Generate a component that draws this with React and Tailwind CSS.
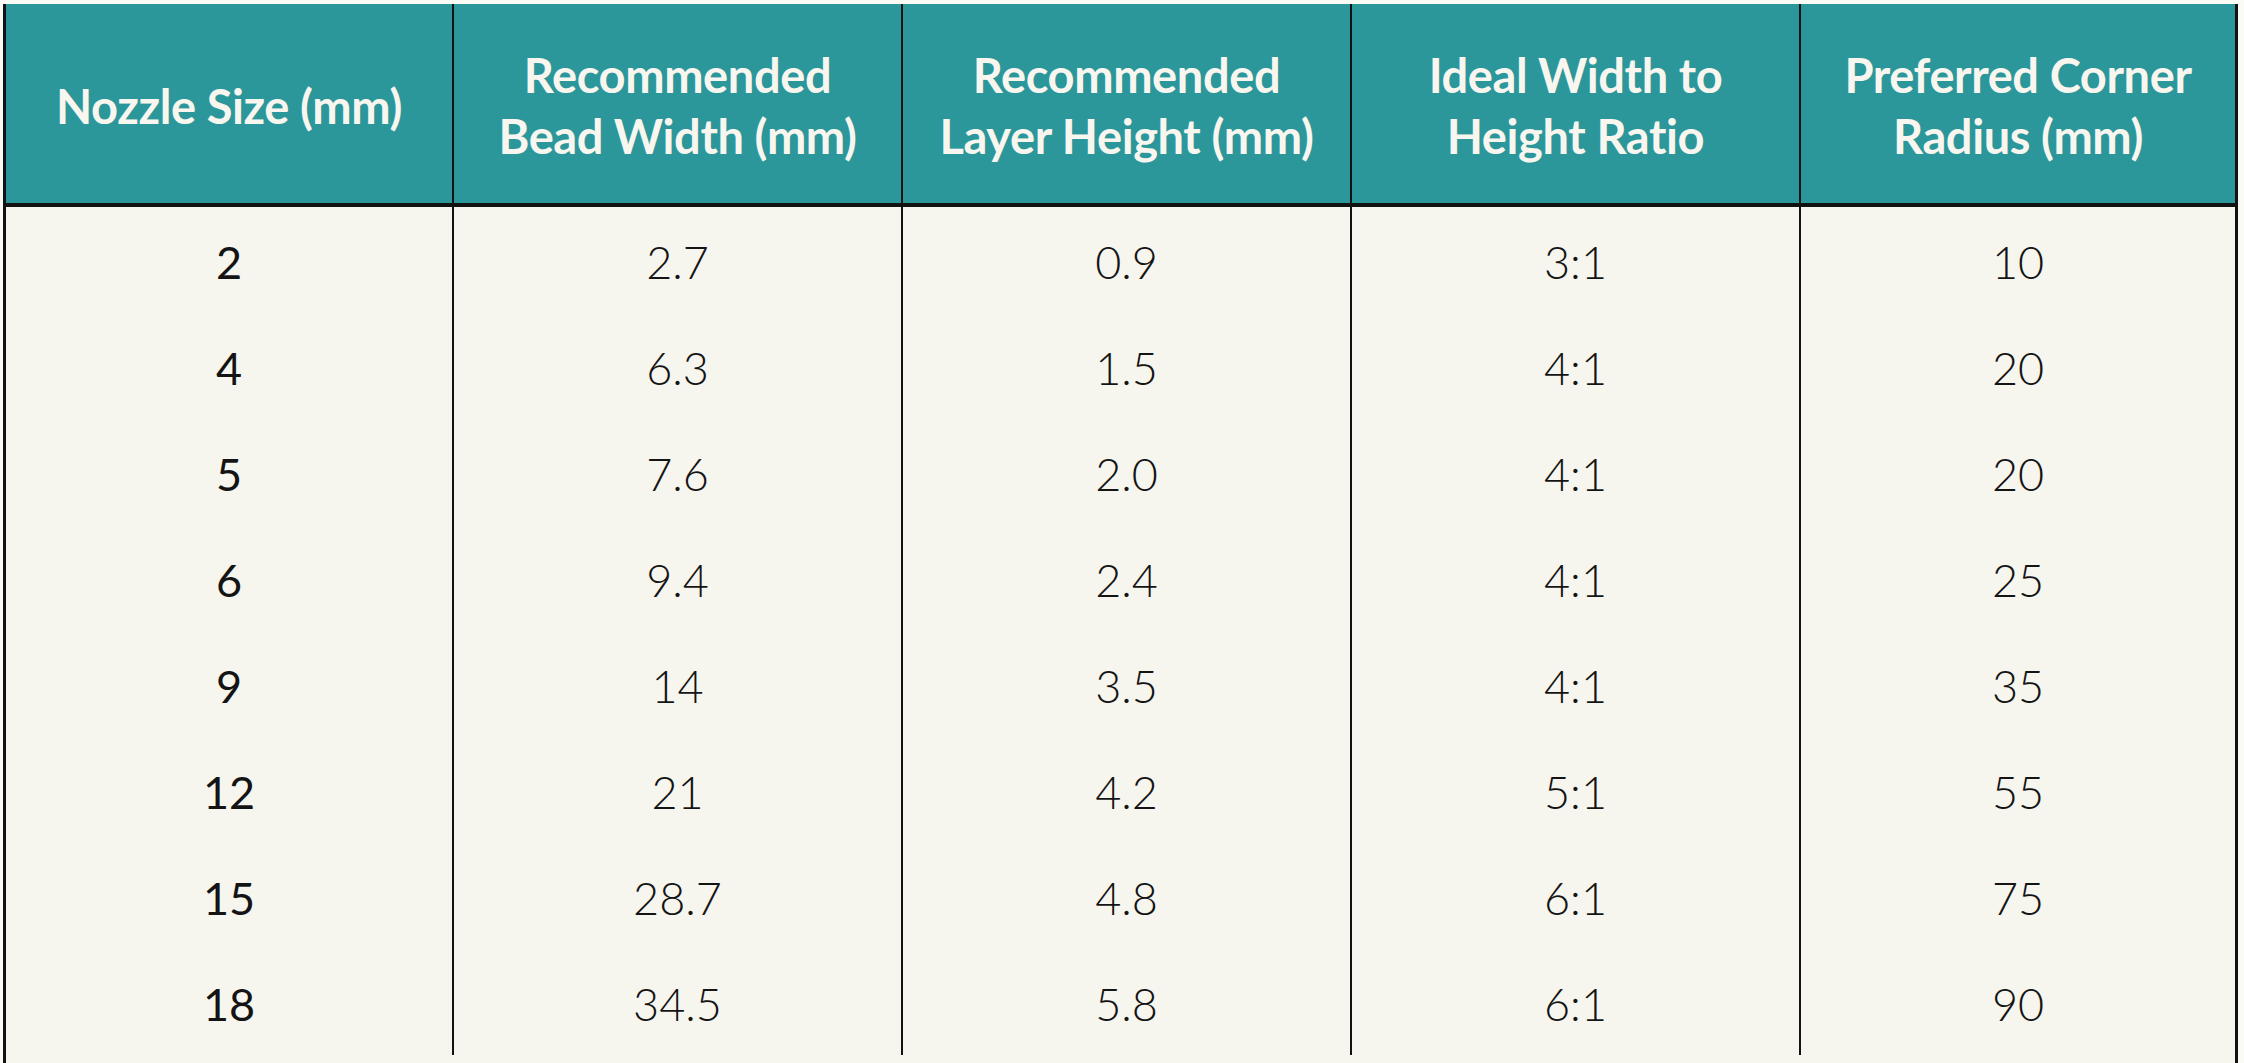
const headers = [
  ["Nozzle Size (mm)"],
  ["Recommended", "Bead Width (mm)"],
  ["Recommended", "Layer Height (mm)"],
  ["Ideal Width to", "Height Ratio"],
  ["Preferred Corner", "Radius (mm)"],
];

const rows = [
  ["2", "2.7", "0.9", "3:1", "10"],
  ["4", "6.3", "1.5", "4:1", "20"],
  ["5", "7.6", "2.0", "4:1", "20"],
  ["6", "9.4", "2.4", "4:1", "25"],
  ["9", "14", "3.5", "4:1", "35"],
  ["12", "21", "4.2", "5:1", "55"],
  ["15", "28.7", "4.8", "6:1", "75"],
  ["18", "34.5", "5.8", "6:1", "90"],
];

const cols = "grid grid-cols-[446px_449px_449px_449px_1fr]";

export default function App() {
  return (
    <div
      className="w-[2244px] h-[1063px] bg-[#fbfbf6] pt-1 pl-[3px] overflow-hidden"
      style={{ fontFamily: '"Lato", "Open Sans", sans-serif' }}
    >
      <div className="w-[2235px] h-[1059px] bg-[#f7f6ee] border-x-[3px] border-[#121212]">
        {/* header */}
        <div className={`${cols} h-[203px] bg-[#2c979b] border-b-4 border-[#121212]`}>
          {headers.map((lines, i) => (
            <div
              key={i}
              className={`flex flex-col items-center justify-center pt-[5px] text-[#f8f6ee] font-bold text-[47px] leading-[61px] tracking-[-0.4px] ${
                i > 0 ? "border-l-2 border-[#121212]" : ""
              }`}
            >
              {lines.map((l) => (
                <span key={l}>{l}</span>
              ))}
            </div>
          ))}
        </div>

        {/* body */}
        {rows.map((r, ri) => (
          <div key={ri} className={`${cols} h-[106px]`}>
            {r.map((v, ci) => (
              <div
                key={ci}
                className={`flex items-center justify-center pt-[6px] text-[45px] text-[#141414] ${
                  ci === 0 ? "font-normal" : "font-light border-l-2 border-[#121212]"
                }`}
              >
                {v}
              </div>
            ))}
          </div>
        ))}
      </div>
    </div>
  );
}
